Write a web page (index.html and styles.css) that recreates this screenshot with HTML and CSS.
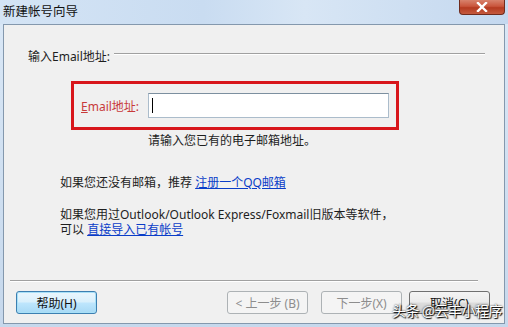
FILE: index.html
```html
<!DOCTYPE html>
<html>
<head>
<meta charset="utf-8">
<link rel="stylesheet" href="styles.css">
</head>
<body>
<div class="window">
  <div class="titlebar">
    <span class="title">新建帐号向导</span>
    <div class="close">
      <svg width="14" height="10" viewBox="0 0 14 10"><path d="M3 1 L11 9 M11 1 L3 9" stroke="#fff" stroke-width="2.4" stroke-linecap="square"/></svg>
    </div>
  </div>
  <div class="client">
    <div class="content">
      <div class="group-title"><span>输入Email地址:</span><div class="etch"></div></div>
      <div class="highlight">
        <span class="label"><u>E</u>mail地址:</span>
        <div class="input"><span class="caret"></span></div>
      </div>
      <div class="hint">请输入您已有的电子邮箱地址。</div>
      <p class="para">如果您还没有邮箱，推荐 <a href="#">注册一个QQ邮箱</a></p>
      <p class="para">如果您用过Outlook/Outlook Express/Foxmail旧版本等软件，<br>可以 <a href="#">直接导入已有帐号</a></p>
    </div>
    <div class="sep"></div>
    <div class="buttons">
      <div class="btn default">帮助(H)</div>
      <div class="spacer"></div>
      <div class="btn disabled">&lt; 上一步 (B)</div>
      <div class="btn disabled next">下一步(X)</div>
      <div class="btn cancel">取消(C)</div>
    </div>
  </div>
  <div class="watermark">头条 @云丰小程序</div>
</div>
</body>
</html>
```
FILE: styles.css
```css
* { box-sizing: border-box; }
html, body { margin: 0; padding: 0; }
body {
  width: 508px;
  height: 327px;
  overflow: hidden;
  font-family: "Noto Sans", "Noto Sans CJK SC", sans-serif;
  font-size: 12px;
  color: #1e1e1e;
}
.window {
  position: relative;
  width: 508px;
  height: 327px;
  background: linear-gradient(to bottom, #cfe0f3 0px, #d9e7f6 24px, #c6d8ec 100%);
  display: flex;
  flex-direction: column;
}
.titlebar {
  height: 24px;
  display: flex;
  align-items: flex-start;
  justify-content: space-between;
  background: linear-gradient(to right, #d4e4f5 0%, #c9dcf1 40%, #d8e6f5 60%, #c4d8ef 100%);
}
.title {
  font-family: "Noto Sans CJK SC", sans-serif;
  font-size: 12.5px;
  line-height: 22px;
  padding-left: 3px;
  color: #111;
}
.close {
  width: 46px;
  height: 15px;
  margin-right: 3px;
  border: 1px solid #6f2b1d;
  border-top: none;
  border-radius: 0 0 4px 4px;
  background: linear-gradient(to bottom, #d8826c 0%, #c9553c 45%, #b53a20 55%, #c45a3e 100%);
  display: flex;
  align-items: center;
  justify-content: center;
}
.client {
  margin: 0 3px 0 3px;
  height: 300px;
  border: 1px solid #8498ad;
  background: #f0f0f0;
  display: flex;
  flex-direction: column;
}
.content {
  height: 255px;
  padding: 0 0 0 24px;
}
.group-title {
  display: flex;
  align-items: center;
  margin-top: 23px;
  height: 18px;
}
.group-title span { line-height: 18px; }
.etch {
  flex: 1;
  margin: 0 19px 0 4px;
  height: 2px;
  margin-top: -7px;
  border-top: 1px solid #a0a0a0;
  border-bottom: 1px solid #ffffff;
}
.highlight {
  margin: 15px 0 0 43px;
  width: 328px;
  height: 49px;
  border: 3px solid #d8161b;
  display: flex;
  align-items: center;
  padding-left: 7px;
}
.label {
  color: #c83a3a;
  width: 67px;
}
.label u { text-decoration: underline; }
.input {
  width: 241px;
  height: 25px;
  background: #fff;
  border: 1px solid #abbccb;
  border-top-color: #7c8f9f;
  display: flex;
  align-items: center;
  padding-left: 3px;
}
.caret {
  width: 1px;
  height: 15px;
  background: #000;
}
.hint {
  margin: 3px 0 0 120px;
  line-height: 16px;
}
.para {
  margin: 0 0 0 32px;
  line-height: 15px;
}
.hint + .para { margin-top: 26px; }
.para + .para { margin-top: 17px; }
a { color: #0a3dc8; text-decoration: underline; }
.sep {
  margin: 0 26px 0 6px;
  height: 2px;
  border-top: 1px solid #a0a0a0;
  border-bottom: 1px solid #fff;
}
.buttons {
  display: flex;
  padding: 9px 0 0 12px;
}
.spacer { width: 130px; }
.btn {
  width: 81px;
  height: 23px;
  border: 1px solid #707070;
  border-radius: 3px;
  background: linear-gradient(to bottom, #f4f4f4 0%, #ebebeb 48%, #dddddd 52%, #cfcfcf 100%);
  display: flex;
  align-items: center;
  justify-content: center;
  color: #111;
  font-size: 12px;
}
.btn.default {
  border-color: #3c7fb1;
  box-shadow: inset 0 0 0 1px #a8e0f7;
  background: linear-gradient(to bottom, #eaf6fd 0%, #d9f0fc 48%, #bee6fd 52%, #a7d9f5 100%);
}
.btn.disabled {
  border-color: #adb2b5;
  background: #f4f4f4;
  color: #8d8d8d;
}
.btn.next { margin-left: 13px; }
.btn.cancel { margin-left: 7px; }
.watermark {
  position: absolute;
  left: 392px;
  top: 301px;
  font-family: "Noto Sans CJK SC", sans-serif;
  font-size: 14px;
  line-height: 18px;
  color: #fff;
  text-shadow: 0 0 2px #000, 1px 1px 1px #000;
  letter-spacing: -0.5px;
}
```
